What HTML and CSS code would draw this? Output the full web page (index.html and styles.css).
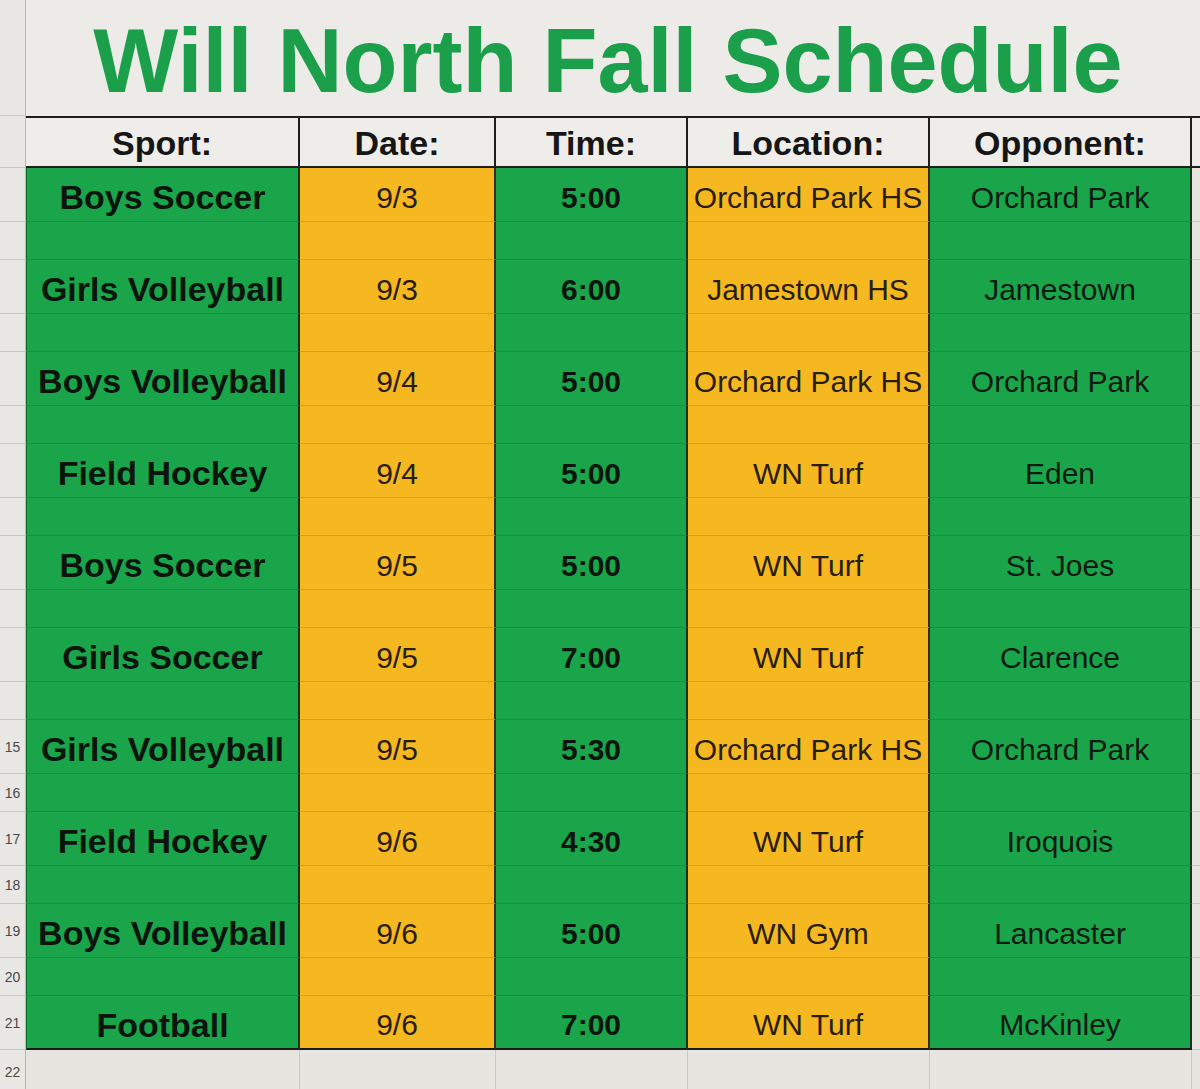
FILE: index.html
```html
<!DOCTYPE html>
<html lang="en">
<head>
<meta charset="utf-8">
<title>Will North Fall Schedule</title>
<link rel="stylesheet" href="styles.css">
</head>
<body>
<div class="sheet">
  <div class="row r-title"><div class="rn"></div><div class="title">Will North Fall Schedule</div></div>
  <div class="row r-head">
    <div class="rn"></div>
    <div class="c h">Sport:</div><div class="c h">Date:</div><div class="c h">Time:</div><div class="c h">Location:</div><div class="c h">Opponent:</div><div class="c x"></div>
  </div>

  <div class="row r-text"><div class="rn"></div><div class="c g sport">Boys Soccer</div><div class="c o">9/3</div><div class="c g time">5:00</div><div class="c o">Orchard Park HS</div><div class="c g">Orchard Park</div><div class="c x"></div></div>
  <div class="row r-gap"><div class="rn"></div><div class="c g"></div><div class="c o"></div><div class="c g"></div><div class="c o"></div><div class="c g"></div><div class="c x"></div></div>

  <div class="row r-text"><div class="rn"></div><div class="c g sport">Girls Volleyball</div><div class="c o">9/3</div><div class="c g time">6:00</div><div class="c o">Jamestown HS</div><div class="c g">Jamestown</div><div class="c x"></div></div>
  <div class="row r-gap"><div class="rn"></div><div class="c g"></div><div class="c o"></div><div class="c g"></div><div class="c o"></div><div class="c g"></div><div class="c x"></div></div>

  <div class="row r-text"><div class="rn"></div><div class="c g sport">Boys Volleyball</div><div class="c o">9/4</div><div class="c g time">5:00</div><div class="c o">Orchard Park HS</div><div class="c g">Orchard Park</div><div class="c x"></div></div>
  <div class="row r-gap"><div class="rn"></div><div class="c g"></div><div class="c o"></div><div class="c g"></div><div class="c o"></div><div class="c g"></div><div class="c x"></div></div>

  <div class="row r-text"><div class="rn"></div><div class="c g sport">Field Hockey</div><div class="c o">9/4</div><div class="c g time">5:00</div><div class="c o">WN Turf</div><div class="c g">Eden</div><div class="c x"></div></div>
  <div class="row r-gap"><div class="rn"></div><div class="c g"></div><div class="c o"></div><div class="c g"></div><div class="c o"></div><div class="c g"></div><div class="c x"></div></div>

  <div class="row r-text"><div class="rn"></div><div class="c g sport">Boys Soccer</div><div class="c o">9/5</div><div class="c g time">5:00</div><div class="c o">WN Turf</div><div class="c g">St. Joes</div><div class="c x"></div></div>
  <div class="row r-gap"><div class="rn"></div><div class="c g"></div><div class="c o"></div><div class="c g"></div><div class="c o"></div><div class="c g"></div><div class="c x"></div></div>

  <div class="row r-text"><div class="rn"></div><div class="c g sport">Girls Soccer</div><div class="c o">9/5</div><div class="c g time">7:00</div><div class="c o">WN Turf</div><div class="c g">Clarence</div><div class="c x"></div></div>
  <div class="row r-gap"><div class="rn"></div><div class="c g"></div><div class="c o"></div><div class="c g"></div><div class="c o"></div><div class="c g"></div><div class="c x"></div></div>

  <div class="row r-text"><div class="rn">15</div><div class="c g sport">Girls Volleyball</div><div class="c o">9/5</div><div class="c g time">5:30</div><div class="c o">Orchard Park HS</div><div class="c g">Orchard Park</div><div class="c x"></div></div>
  <div class="row r-gap"><div class="rn">16</div><div class="c g"></div><div class="c o"></div><div class="c g"></div><div class="c o"></div><div class="c g"></div><div class="c x"></div></div>

  <div class="row r-text"><div class="rn">17</div><div class="c g sport">Field Hockey</div><div class="c o">9/6</div><div class="c g time">4:30</div><div class="c o">WN Turf</div><div class="c g">Iroquois</div><div class="c x"></div></div>
  <div class="row r-gap"><div class="rn">18</div><div class="c g"></div><div class="c o"></div><div class="c g"></div><div class="c o"></div><div class="c g"></div><div class="c x"></div></div>

  <div class="row r-text"><div class="rn">19</div><div class="c g sport">Boys Volleyball</div><div class="c o">9/6</div><div class="c g time">5:00</div><div class="c o">WN Gym</div><div class="c g">Lancaster</div><div class="c x"></div></div>
  <div class="row r-gap"><div class="rn">20</div><div class="c g"></div><div class="c o"></div><div class="c g"></div><div class="c o"></div><div class="c g"></div><div class="c x"></div></div>

  <div class="row r-text last"><div class="rn">21</div><div class="c g sport">Football</div><div class="c o">9/6</div><div class="c g time">7:00</div><div class="c o">WN Turf</div><div class="c g">McKinley</div><div class="c x"></div></div>

  <div class="row r-empty"><div class="rn">22</div><div class="c e"></div><div class="c e"></div><div class="c e"></div><div class="c e"></div><div class="c e"></div><div class="c x"></div></div>
</div>
</body>
</html>
```

FILE: styles.css
```css
* {
  box-sizing: border-box;
  margin: 0;
  padding: 0;
}

body {
  margin: 0;
  background: #e6e4df;
  font-family: "Liberation Sans", Arial, sans-serif;
  color: #161616;
  overflow: hidden;
}

.sheet {
  width: 1200px;
  height: 1089px;
  overflow: hidden;
}

.row {
  display: grid;
  grid-template-columns: 26px 274px 196px 192px 242px 262px 8px;
}

.r-title { height: 116px; background: #ecebe7; }
.r-head { height: 52px; }
.r-text { height: 54px; }
.r-gap { height: 38px; }
.r-empty { height: 45px; }

.rn {
  background: #e8e7e3;
  border-right: 1px solid #b9b8b4;
  border-bottom: 1px solid #c8c7c3;
  font-size: 14px;
  color: #4a4a4a;
  display: flex;
  align-items: center;
  justify-content: center;
  white-space: nowrap;
}

.title {
  grid-column: 2 / -1;
  display: flex;
  align-items: center;
  justify-content: center;
  font-size: 90px;
  font-weight: bold;
  color: #1c9f4b;
  padding-top: 6px;
  padding-right: 10px;
}

.c {
  display: flex;
  align-items: center;
  justify-content: center;
  white-space: nowrap;
  font-size: 30px;
  overflow: hidden;
}

.h {
  background: #eeede9;
  border-top: 2px solid #1e1e1e;
  border-bottom: 2px solid #1e1e1e;
  border-right: 2px solid #1e1e1e;
  font-weight: bold;
  font-size: 34px;
  color: #161616;
  padding-top: 2px;
}

.r-head .h:first-of-type {
  border-left: 1px solid #9a9a96;
}

.r-head .x {
  background: #eeede9;
  border-top: 2px solid #1e1e1e;
  border-bottom: 2px solid #1e1e1e;
}

.g {
  background: #1aa54b;
  border-right: 2px solid #17321f;
  border-bottom: 1px solid #169141;
  color: #0f1a12;
}

.o {
  background: #f6b820;
  border-right: 2px solid #3b2a0c;
  border-bottom: 1px solid #d9a01c;
  color: #2a1d0c;
}

.r-text .c.g:nth-child(2),
.r-gap .c.g:nth-child(2) {
  border-left: 1px solid #0f6e30;
}

.r-text .c {
  padding-top: 6px;
}

.sport {
  font-weight: bold;
  font-size: 34px;
  color: #0c140e;
}

.time {
  font-weight: bold;
  color: #0c140e;
}

.x {
  background: #e6e4df;
  border-bottom: 1px solid #c8c7c3;
}

.last .g,
.last .o {
  border-bottom: 2px solid #1a1a1a;
}

.e {
  background: #e7e5e0;
  border-right: 1px solid #c8c7c3;
  border-bottom: 1px solid #c8c7c3;
}
```
